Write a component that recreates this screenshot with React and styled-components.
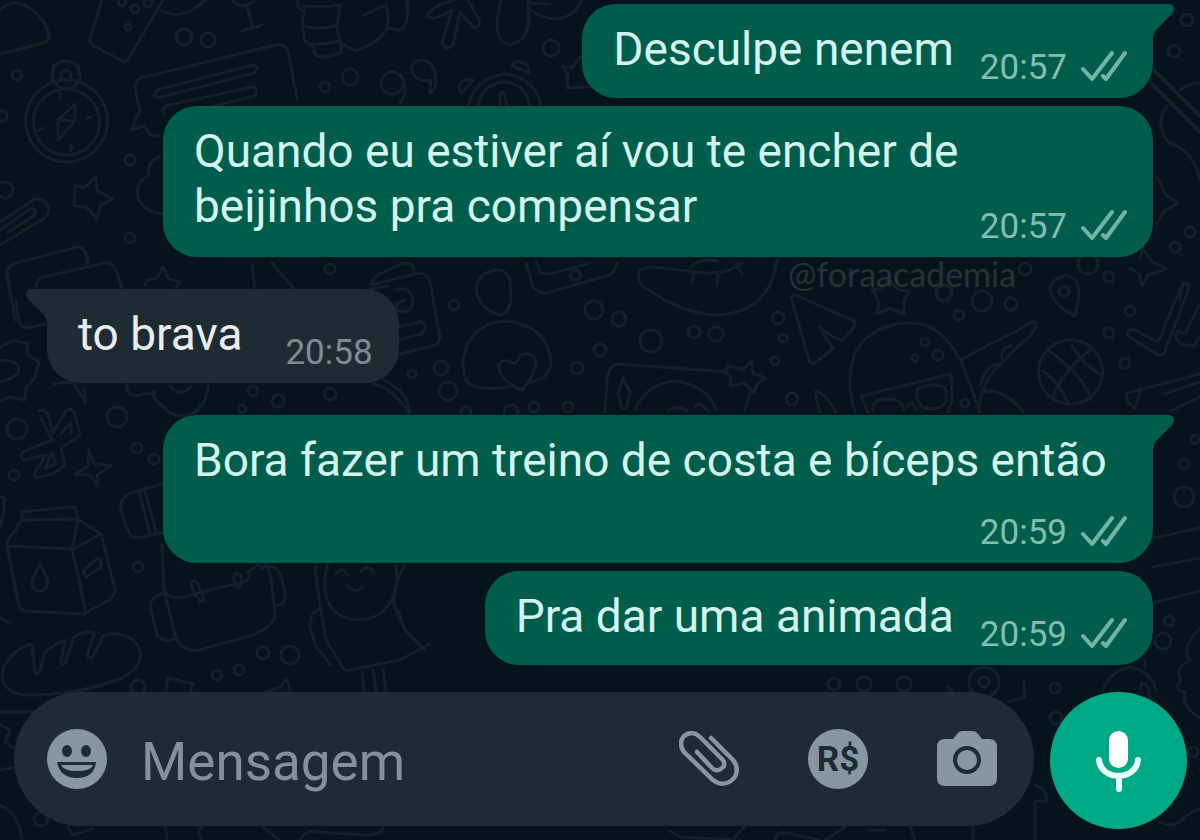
import React from "react";
import styled, { createGlobalStyle } from "styled-components";

const GlobalStyle = createGlobalStyle`
  *, *::before, *::after { box-sizing: border-box; }
  body {
    margin: 0;
    background: #07131b;
    font-family: Roboto, "Liberation Sans", sans-serif;
  }
`;

const Page = styled.div`
  position: relative;
  display: flex;
  flex-direction: column;
  min-height: 100vh;
  overflow: hidden;
  isolation: isolate;
`;

const WallpaperSvg = styled.svg`
  position: absolute;
  inset: 0;
  width: 100%;
  height: 100%;
  z-index: -1;
  fill: none;
  stroke: #142027;
  stroke-width: 3;
  stroke-linecap: round;
  stroke-linejoin: round;
`;

const MessageList = styled.ol`
  flex: 1;
  display: flex;
  flex-direction: column;
  gap: 8px;
  margin: 0;
  padding: 4px 47px 27px;
  list-style: none;
`;

const MessageRow = styled.li`
  display: flex;
  justify-content: ${(p) => (p.$incoming ? "flex-start" : "flex-end")};
  margin-top: ${(p) => (p.$newGroup ? "24px" : "0")};
`;

const Bubble = styled.div`
  position: relative;
  display: flex;
  flex-direction: ${(p) => (p.$layout === "below" ? "column" : "row")};
  flex-grow: ${(p) => (p.$layout ? 1 : 0)};
  align-items: flex-end;
  gap: ${(p) => ({ below: "25px", wrapped: "0" })[p.$layout] || (p.$incoming ? "43px" : "26px")};
  max-width: calc(100% - 116px);
  padding: 18px 26px 10px 31px;
  border-radius: 34px;
  border-top-left-radius: ${(p) => (p.$tail && p.$incoming ? "0" : "34px")};
  border-top-right-radius: ${(p) => (p.$tail && !p.$incoming ? "0" : "34px")};
  background: ${(p) => (p.$incoming ? "#1f2b33" : "#005d4b")};
  color: ${(p) => (p.$incoming ? "#e9edf2" : "#d3f4ee")};
`;

const TailSvg = styled.svg`
  position: absolute;
  top: 0;
  width: 23px;
  height: 36px;
  ${(p) => (p.$incoming ? "right: calc(100% - 1px); transform: scaleX(-1);" : "left: calc(100% - 1px);")}
  fill: ${(p) => (p.$incoming ? "#1f2b33" : "#005d4b")};
`;

const Text = styled.p`
  margin: 0;
  padding-bottom: ${(p) => ({ below: "0", wrapped: "13px" })[p.$layout] || "11px"};
  flex: 1;
  align-self: stretch;
  font-size: 46px;
  line-height: 55px;
`;

const Meta = styled.div`
  display: flex;
  align-items: center;
  gap: 14px;
  color: ${(p) => (p.$incoming ? "#7f8b93" : "#83bdb0")};
  font-size: 35px;
  line-height: 40px;
`;

const TickSvg = styled.svg`
  width: 46px;
  height: 40px;
  fill: none;
  stroke: #72b5a7;
  stroke-width: 4;
  stroke-linecap: round;
  stroke-linejoin: round;
`;

const Watermark = styled.span`
  position: absolute;
  top: 254px;
  left: 788px;
  color: #263138;
  font-family: Lato, "Open Sans", sans-serif;
  font-size: 34px;
  line-height: 40px;
  pointer-events: none;
`;

const Composer = styled.form`
  display: flex;
  gap: 16px;
  padding: 0 13px 11px 14px;
`;

const Field = styled.div`
  flex: 1;
  min-width: 0;
  height: 134px;
  display: flex;
  align-items: center;
  padding: 0 37px 0 33px;
  border-radius: 67px;
  background: #1f2b33;
`;

const MessageInput = styled.input`
  flex: 1;
  min-width: 0;
  height: 80px;
  padding: 6px 0 0;
  margin: 0 28px 0 34px;
  border: 0;
  outline: 0;
  background: transparent;
  color: #e9edf2;
  font: 53px Roboto, "Liberation Sans", sans-serif;
  &::placeholder { color: #82919b; opacity: 1; }
`;

const Actions = styled.div`
  display: flex;
  gap: 69px;
`;

const IconButton = styled.button`
  flex: none;
  display: grid;
  place-items: center;
  width: 60px;
  height: 60px;
  padding: 0;
  border: 0;
  border-radius: 50%;
  background: ${(p) => (p.$filled ? "#8797a2" : "transparent")};
  color: ${(p) => (p.$filled ? "#1f2b33" : "#8797a2")};
  font: 700 35px Roboto, "Liberation Sans", sans-serif;
  cursor: pointer;
  svg { display: block; width: 60px; height: 60px; }
`;

const MicButton = styled.button`
  flex: none;
  display: grid;
  place-items: center;
  width: 137px;
  height: 137px;
  padding: 0;
  border: 0;
  border-radius: 50%;
  background: #00a985;
  cursor: pointer;
`;

/* Rings scattered between the doodles: [cx, cy, r] */
const RINGS = [
  [184, 37, 8], [208, 40, 7], [17, 75, 5], [66, 75, 5], [66, 75, 14], [2, 116, 5], [130, 160, 5],
  [5, 190, 8], [130, 238, 5], [325, 87, 5], [350, 77, 8], [392, 83, 11], [122, 2, 4], [135, 9, 4],
  [148, 3, 4], [128, 27, 3], [551, 48, 8], [330, 269, 5], [454, 305, 5], [594, 310, 9],
  [619, 319, 7], [651, 341, 11], [694, 332, 6], [716, 334, 7], [600, 350, 6], [577, 368, 6],
  [441, 368, 7], [412, 374, 4], [448, 391, 9], [778, 318, 6], [783, 338, 4], [775, 361, 4],
  [792, 399, 6], [534, 407, 5], [568, 407, 5], [466, 412, 5], [511, 412, 7], [982, 301, 10],
  [1011, 304, 6], [959, 315, 5], [944, 293, 8], [1025, 269, 6], [1109, 277, 5], [1130, 311, 5],
  [1109, 333, 5], [1125, 363, 5], [925, 342, 4], [938, 355, 5], [915, 358, 3], [965, 403, 4],
  [1064, 291, 5], [1088, 264, 10], [1175, 247, 5], [1190, 232, 5], [1174, 51, 6], [1187, 20, 6],
  [253, 391, 5], [278, 401, 6], [330, 394, 6], [242, 409, 4], [117, 417, 10], [17, 429, 10],
  [137, 448, 5], [154, 459, 5], [14, 475, 5], [138, 567, 5], [263, 653, 6], [290, 655, 9],
  [239, 670, 5], [217, 675, 5], [138, 687, 7], [1184, 464, 5], [1195, 439, 4], [1184, 497, 10],
  [1169, 621, 5], [1163, 641, 8], [1055, 688, 5], [1056, 718, 6], [41, 819, 7], [834, 684, 6],
  [864, 684, 7], [904, 684, 7], [1193, 752, 5], [984, 682, 5], [984, 682, 15],
];

const DOODLES = [
  /* slice, phone and badges along the top edge */
  "M0 10Q12 -2 28 7Q45 18 49 36Q50 40 44 43L0 54",
  "M102 0L90 38Q89 43 94 46L122 61Q126 63 129 58L163 0",
  "M160 10Q184 22 205 0",
  "M232 0Q240 10 254 2M247 6L253 27M242 31L262 25",
  "M298 0Q296 9 304 11L302 25L305 41L313 46L315 55Q323 60 342 52L340 41Q332 44 310 44M303 26Q318 30 337 26L340 5Q320 8 303 6M337 26L340 43L355 51Q390 40 388 16L386 5M364 15L386 5M388 28L400 30",
  "M400 30Q409 28 407 0M454 0L440 5Q426 12 428 16Q433 22 452 10L442 42Q445 52 453 45L460 12L473 27Q481 29 479 20L468 0M501 0Q490 42 510 45Q530 40 529 15L528 0M530 10Q565 32 582 0M530 3L550 4",
  /* compass */
  "M52 80L54 65M78 65L80 80M66 80A41 41 0 1 0 67 80M66 89A33 33 0 1 0 67 89M75 104L58 120V140L75 121ZM58 120L75 121M60 93V98M91 117L86 119M37 131L43 128M71 150V145",
  /* speech bubble with text lines */
  "M297 99L288 51Q284 43 276 45L141 78Q134 82 135 89L140 111L131 130L145 126Q150 139 159 135M160 89Q151 93 158 98L254 73Q261 67 253 65ZM165 115Q160 108 169 105L252 87Q260 89 255 96L190 112",
  "M75 185L84 188L96 177L97 190L113 199L101 205L97 219L86 207L74 206Z",
  "M0 222L35 199Q48 199 49 212L45 218L0 245M0 230L30 209Q38 208 34 216L8 232",
  "M160 157Q146 162 149 175Q135 182 138 198Q142 210 162 214",
  "M15 320L7 275Q5 267 15 263L78 247Q86 246 88 265M36 287Q36 280 43 277L105 263Q114 261 118 276L122 289M16 300Q17 328 27 328L45 324",
  "M145 285L147 280L157 278L163 267L169 279L180 282L175 289",
  "M252 265L255 289M272 263L294 289M370 285Q373 277 382 273L403 263Q414 262 414 271M370 285L420 273Q428 274 430 282L440 337Q439 344 432 346L396 355M397 290Q408 286 412 296Q415 310 404 312Q395 313 397 303L405 300M398 327L420 322Q430 325 421 334L398 340M370 289L388 286",
  /* quotation marks and stopwatch */
  "M411 67Q414 59 424 60Q436 64 436 82Q435 92 430 93L431 80Q414 84 411 67M468 106Q475 77 506 74Q535 78 541 106M478 106Q482 82 507 82Q528 86 529 106M500 106V95Q503 85 507 106M459 89Q460 78 473 80L462 93ZM512 66Q516 58 527 65L529 73ZM400 103Q410 90 400 74",
  "M562 66L572 68L580 57M562 66L568 75L567 88L588 87",
  /* gear and propeller */
  "M0 347Q13 340 15 341L27 343L28 355L39 362L35 377L26 388L25 400L10 397L0 401M0 360Q18 360 19 369Q18 378 0 382M39 411Q44 408 48 414L53 433L66 411Q70 407 74 412L80 433Q77 440 61 447L65 465Q56 475 36 478Q32 475 39 466L46 455L24 460Q17 455 27 450L52 440L41 418M61 434L71 422V433M45 468L52 453L56 464ZM54 384Q71 380 75 385L86 403L84 388M89 450L94 464L111 466L97 475L98 486L90 475L76 474L88 466Z",
  "M126 384L128 392Q131 397 140 395L155 392M152 393Q161 410 178 416Q204 417 209 385M170 386Q181 399 191 386M374 384Q388 388 397 398Q407 408 410 414M383 379Q397 386 406 398L410 413",
  /* milk carton */
  "M22 520V512L70 507L75 507L78 519L101 534L115 590Q114 597 109 600L84 614L25 611Q19 609 18 601L7 546V542L22 520L78 519M22 512V520M7 546L72 549L86 613M72 549L78 519M74 549L101 534M40 564Q32 578 32 584Q34 591 41 591Q47 590 48 582Q47 576 40 564M83 571L98 558Q103 563 100 568L86 577Z",
  "M0 497L4 498V510L0 527M0 618L10 623",
  /* bread */
  "M4 683Q-2 669 12 656Q25 643 32 645L35 672Q37 675 40 670L45 652Q58 642 65 640L61 662Q63 667 66 661L74 637Q86 630 94 633L87 655Q90 661 94 655L103 636Q118 630 133 640Q145 652 138 664Q132 675 111 682Q70 696 23 695Q10 694 4 683",
  /* travel bag */
  "M163 484L130 493Q119 498 121 511L129 533Q134 540 142 537L165 532M139 490L150 534M144 488L156 532M162 545L164 590L176 638Q184 653 199 650L250 636Q273 627 275 616L272 585Q270 565 262 562L248 572Q252 576 246 581L183 597Q165 600 163 586M165 593Q150 597 150 606L157 635Q163 643 174 639M261 568Q275 563 280 574L285 591Q287 603 277 606M192 588Q190 580 196 581L203 596Q205 603 200 601ZM233 578Q236 570 241 576Q244 583 238 588Z",
  /* tea cup with a face */
  "M315 567L320 605L326 640L342 666Q344 672 350 670L400 660L430 644M320 609Q309 613 310 628L316 647Q324 655 330 665M328 564Q319 595 335 612Q355 626 378 615Q401 600 396 566M336 574Q342 565 348 576M361 571Q368 563 374 573M347 585Q355 595 363 586M400 620Q386 596 405 565M398 610L405 630L425 650M362 672L364 691M373 670L376 690M383 669L386 691",
  "M166 690L168 678L193 684L190 692M266 692L280 687L287 678L290 691",
  /* egg, sleepy face, phone, banana */
  "M492 271Q505 267 510 280Q514 314 500 315Q477 308 476 288Q479 273 492 271M474 386Q462 384 463 359Q470 322 507 321Q548 326 551 363Q549 379 531 382M474 386Q490 391 512 386L522 390Q535 375 536 362Q534 351 521 355L515 364Q501 356 499 366Q498 379 522 390",
  "M526 263L533 287Q538 293 546 293L606 276Q615 274 617 263M536 261L541 273L550 274L590 263M575 270A5 5 0 1 0 576 270",
  "M640 270Q635 283 647 289Q681 313 716 315Q770 313 777 260M640 270Q648 265 670 269L705 273Q731 273 742 263M694 271L692 284M718 273L717 285M736 264L742 274M690 268Q700 257 718 261",
  "M605 412L607 379Q609 365 619 364L727 372M635 410Q645 385 674 381Q708 385 716 410M623 378L618 393L622 409H626L630 392ZM724 372L731 377L730 386L744 383L754 393L757 384L765 378L753 373L751 361L743 370L729 366ZM750 394L745 410M695 407Q699 400 708 411M668 411Q678 404 687 411",
  /* pizza, helmet, rocket */
  "M791 297Q793 293 800 297L854 321Q857 325 850 332L842 341Q830 336 820 327Q823 335 833 348L815 363Q811 366 809 360ZM872 289L881 290L889 280L898 290L910 291L904 300L904 314L890 308L877 314L879 302ZM935 290Q936 301 945 300Q954 297 952 290",
  "M855 412Q842 370 861 343Q888 317 925 325Q949 334 964 368L980 412M861 396L951 374L952 400L948 412M861 396L868 412M873 411Q873 398 886 399Q902 398 903 410M918 389Q914 397 922 407Q933 411 943 406Q950 396 944 387Q929 382 918 389M904 410L912 402L917 410M961 360L988 345L1020 329Q1038 317 1036 325Q1034 335 1020 344L994 371Q983 383 979 408M980 386Q985 367 996 364Q1004 368 999 364M1002 358Q1000 347 1011 346M985 391Q1007 390 1023 412M815 392Q816 400 820 412M815 392Q824 391 836 412",
  /* map pin, basketball, ticks */
  "M1065 275Q1050 280 1050 291Q1054 306 1075 316Q1081 292 1078 285Q1075 277 1065 275M1070 340A32 32 0 1 0 1071 340M1048 350Q1085 377 1091 400M1043 371Q1060 384 1068 403M1053 397Q1062 372 1090 350M1072 345Q1080 362 1101 375",
  "M1128 336Q1126 329 1135 330L1158 342L1181 287Q1187 281 1189 288L1165 351Q1162 358 1155 353ZM1200 304L1185 334L1178 331Q1172 337 1181 344L1194 346L1200 336",
  "M1127 393L1200 374M1127 393Q1124 400 1135 408L1141 389M1200 382L1165 394M1170 411L1200 397M1140 260L1143 248L1151 261L1166 269L1148 275L1142 286L1139 274L1130 268",
  /* guitar and pencils on the right edge */
  "M1154 70L1200 116M1150 82L1200 132M1180 90Q1190 83 1200 83M1167 106Q1154 125 1168 142Q1194 151 1200 180M1157 177L1166 195L1178 203L1163 212L1157 224M1180 300L1183 283L1190 285",
  "M1153 538L1200 528M1153 567L1200 558M1153 603L1200 591M1200 628Q1180 650 1190 660Q1173 670 1181 680Q1172 690 1185 692Q1180 705 1200 718",
  "M1104 688Q1110 671 1130 667Q1154 672 1156 692M1140 690Q1141 677 1149 689V699M1145 667V660",
  /* doodles that peek out around the composer */
  "M0 712H34M0 725L10 730L5 742L14 748M0 770L14 767M0 805Q20 815 22 840M68 826L72 835L92 829M165 826L167 840M202 826Q196 831 202 840M262 826L279 840M300 840Q305 829 318 832L350 834Q380 838 383 828M670 831L680 837L735 840M745 826L735 837M775 840Q777 828 795 835L820 840M845 827L825 840M870 830H885M910 826L915 840M973 826V840M1035 785Q1049 790 1046 801H1035V840M1160 822Q1175 830 1187 815L1200 808M948 687L960 700M1024 680L1025 697L1008 702",
];

const Wallpaper = () => (
  <WallpaperSvg viewBox="0 0 1200 840" preserveAspectRatio="xMinYMin slice" aria-hidden="true">
    {RINGS.map(([cx, cy, r]) => (
      <circle key={`${cx}-${cy}-${r}`} cx={cx} cy={cy} r={r} />
    ))}
    {DOODLES.map((d) => (
      <path key={d} d={d} />
    ))}
  </WallpaperSvg>
);

const Tail = ({ incoming }) => (
  <TailSvg viewBox="0 0 23 36" $incoming={incoming} aria-hidden="true">
    <path d="M0 0H18Q22 1 22 5Q22 8 20 10L4 26Q1 30 1 36H0Z" />
  </TailSvg>
);

const Ticks = () => (
  <TickSvg viewBox="0 0 46 40" role="img" aria-label="Entregue">
    <path d="M2 21L11 31L31 5M22 28L25 31L44 5" />
  </TickSvg>
);

const SmileIcon = () => (
  <svg viewBox="0 0 60 60" aria-hidden="true" fill="#1f2b33">
    <ellipse cx="20" cy="22" rx="5" ry="6" />
    <ellipse cx="39" cy="22" rx="5" ry="6" />
    <path d="M10 33H49Q47 49 30 49Q13 49 10 33Z" />
    <path d="M14 36H46Q44 42 30 42Q17 42 14 36Z" fill="#8797a2" />
  </svg>
);

const ClipIcon = () => (
  <svg viewBox="0 0 60 60" aria-hidden="true" fill="none" stroke="currentColor" strokeWidth="4.5" strokeLinecap="round">
    <path d="M32 9L54 31C59 37 59 45 54 50C48 56 40 56 34 51L5 23C1 18 1 11 5 7C10 3 16 3 21 8L43 30C46 33 46 37 43 39C40 42 36 42 33 39L18 23" />
  </svg>
);

const CameraIcon = () => (
  <svg viewBox="0 0 60 60" aria-hidden="true" fill="currentColor">
    <path d="M20 5Q22 2 26 2H35Q39 2 41 5L45 10H52Q60 10 60 18V49Q60 57 52 57H8Q0 57 0 49V18Q0 10 8 10H16Z" />
    <circle cx="30" cy="31" r="12" stroke="#1f2b33" strokeWidth="4" />
  </svg>
);

const MicIcon = () => (
  <svg width="60" height="76" viewBox="0 0 60 76" aria-hidden="true">
    <rect x="20" y="8" width="19" height="37" rx="9.5" fill="#fff" />
    <path d="M10 37C12 58 47 58 49 37M30 54V66" fill="none" stroke="#e9fffa" strokeWidth="6" strokeLinecap="round" />
  </svg>
);

const MESSAGES = [
  { text: "Desculpe nenem", time: "20:57", tail: true },
  { text: "Quando eu estiver aí vou te encher de beijinhos pra compensar", time: "20:57", layout: "wrapped" },
  { text: "to brava", time: "20:58", incoming: true, tail: true, newGroup: true },
  { text: "Bora fazer um treino de costa e bíceps então", time: "20:59", layout: "below", tail: true, newGroup: true },
  { text: "Pra dar uma animada", time: "20:59" },
];

const Message = ({ text, time, incoming, tail, layout, newGroup }) => (
  <MessageRow $incoming={incoming} $newGroup={newGroup}>
    <Bubble $incoming={incoming} $tail={tail} $layout={layout}>
      {tail && <Tail incoming={incoming} />}
      <Text $layout={layout}>{text}</Text>
      <Meta $incoming={incoming}>
        <time>{time}</time>
        {!incoming && <Ticks />}
      </Meta>
    </Bubble>
  </MessageRow>
);

export default function App() {
  return (
    <Page>
      <GlobalStyle />
      <Wallpaper />
      <MessageList>
        {MESSAGES.map((message) => (
          <Message key={message.text} {...message} />
        ))}
      </MessageList>
      <Watermark>@foraacademia</Watermark>
      <Composer onSubmit={(event) => event.preventDefault()}>
        <Field>
          <IconButton type="button" $filled aria-label="Emoji"><SmileIcon /></IconButton>
          <MessageInput type="text" placeholder="Mensagem" aria-label="Mensagem" />
          <Actions>
            <IconButton type="button" aria-label="Anexar"><ClipIcon /></IconButton>
            <IconButton type="button" $filled>R$</IconButton>
            <IconButton type="button" aria-label="Câmera"><CameraIcon /></IconButton>
          </Actions>
        </Field>
        <MicButton type="button" aria-label="Gravar áudio"><MicIcon /></MicButton>
      </Composer>
    </Page>
  );
}
